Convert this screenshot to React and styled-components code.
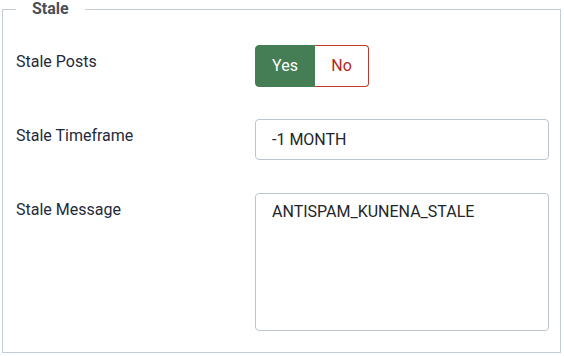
import React from "react";
import styled, { createGlobalStyle } from "styled-components";

const Global = createGlobalStyle`
  html, body { margin: 0; padding: 0; background: #fff; }
  body { font-family: Roboto, "Noto Sans", "Liberation Sans", sans-serif; }
  * { box-sizing: border-box; }
`;

const Page = styled.div`
  padding: 0 3px 3px 2px;
  width: 564px;
`;

const Fieldset = styled.fieldset`
  margin: 0;
  border: 1px solid #c3cbd4;
  padding: 27px 11px 21px 13px;
  min-width: 0;
`;

const Legend = styled.legend`
  padding: 0 16px;
  font-size: 16px;
  line-height: 18px;
  font-weight: 700;
  color: #4a4f56;
`;

const Row = styled.div`
  display: grid;
  grid-template-columns: 239px 1fr;
  align-items: start;
  min-height: ${(p) => (p.$last ? "auto" : "74px")};
`;

const Label = styled.label`
  padding-top: 5px;
  font-size: 16px;
  line-height: 24px;
  color: #1f2a3c;
`;

const Toggle = styled.div`
  display: inline-flex;
  height: 42px;
  justify-self: start;
`;

const ToggleButton = styled.button`
  font-family: inherit;
  font-size: 16px;
  line-height: 24px;
  height: 100%;
  margin: 0;
  cursor: pointer;
  width: ${(p) => p.$w}px;
  border: 1px solid ${(p) => (p.$active ? "#457d54" : "#c0392f")};
  background: ${(p) => (p.$active ? "#457d54" : "#ffffff")};
  color: ${(p) => (p.$active ? "#ffffff" : "#b3261e")};
  border-radius: ${(p) => (p.$first ? "4px 0 0 4px" : "0 4px 4px 0")};
  ${(p) => (p.$first ? "" : "border-left-width: 0;")}
  padding: 0;
`;

const Input = styled.input`
  width: 100%;
  height: 41px;
  margin: 0;
  padding: 0 16px;
  border: 1px solid #bcc5cf;
  border-radius: 4px;
  font-family: inherit;
  font-size: 16px;
  color: #22262a;
  background: #fff;
  outline: none;
`;

const TextArea = styled.textarea`
  display: block;
  width: 100%;
  height: 138px;
  margin: 0;
  padding: 6px 16px;
  border: 1px solid #bcc5cf;
  border-radius: 4px;
  font-family: inherit;
  font-size: 16px;
  line-height: 24px;
  color: #22262a;
  background: #fff;
  resize: none;
  outline: none;
`;

export default function App() {
  return (
    <Page>
      <Global />
      <Fieldset>
        <Legend>Stale</Legend>
        <Row>
          <Label>Stale Posts</Label>
          <Toggle>
            <ToggleButton $active $first $w={60}>Yes</ToggleButton>
            <ToggleButton $w={54}>No</ToggleButton>
          </Toggle>
        </Row>
        <Row>
          <Label>Stale Timeframe</Label>
          <Input defaultValue="-1 MONTH" />
        </Row>
        <Row $last>
          <Label>Stale Message</Label>
          <TextArea defaultValue="ANTISPAM_KUNENA_STALE" />
        </Row>
      </Fieldset>
    </Page>
  );
}
